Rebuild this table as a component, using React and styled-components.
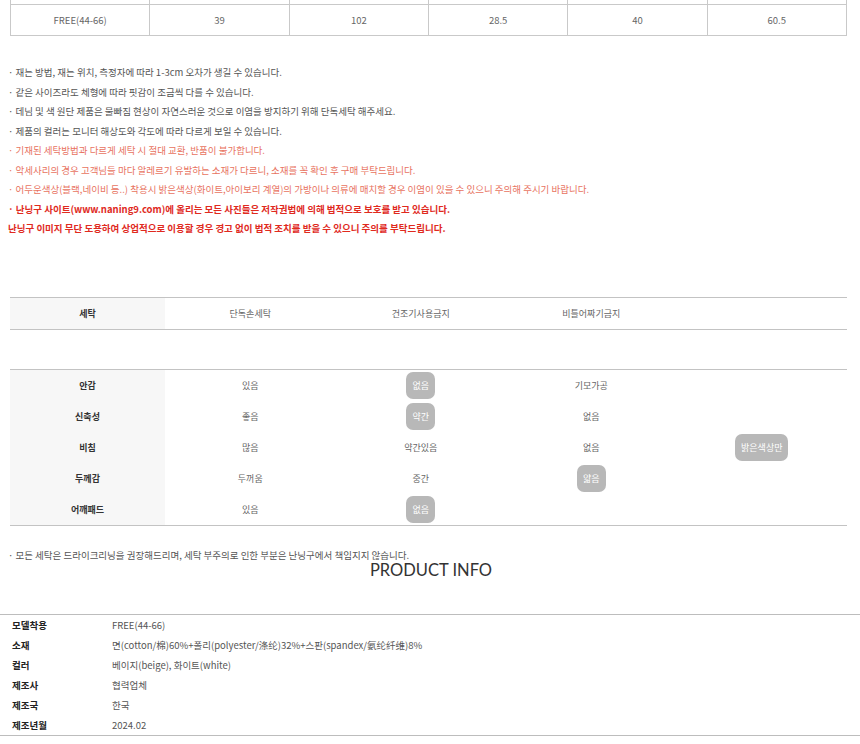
import React from "react";
import styled, { createGlobalStyle } from "styled-components";

const GlobalStyle = createGlobalStyle`
  body {
    margin: 0;
    background: #fff;
    font-family: "Noto Sans CJK KR", "Noto Sans", sans-serif;
    color: #555;
  }
`;

const Page = styled.div`
  width: 860px;
  overflow: hidden;
  padding-bottom: 20px;
`;

const Boxed = styled.div`
  margin: ${(p) => p.$mt || 0}px 13px 0 10px;
`;

const SizeTable = styled.div`
  display: grid;
  grid-template-columns: repeat(6, 1fr);
  border-left: 1px solid #c9c9c9;
`;

const SizeCell = styled.div`
  height: ${(p) => (p.$stub ? 4 : 30)}px;
  display: flex;
  align-items: center;
  justify-content: center;
  border-right: 1px solid #c9c9c9;
  border-bottom: 1px solid #c9c9c9;
  font-size: 9.5px;
  color: #666;
`;

const Notes = styled.ul`
  list-style: none;
  margin: ${(p) => p.$mt || 0}px 0 0 8px;
  padding: 0;
`;

const Note = styled.li`
  font-size: 9.5px;
  line-height: 19.5px;
  white-space: nowrap;
  color: ${(p) =>
    p.$tone === "warn" ? "#e8735f" : p.$tone === "alert" ? "#e02a1e" : "#555"};
  font-weight: ${(p) => (p.$tone === "alert" ? 700 : 400)};
`;

const Grid = styled.div`
  display: grid;
  grid-template-columns: 155px repeat(4, 1fr);
  border-top: 1px solid #c3c3c3;
  border-bottom: 1px solid #c3c3c3;
`;

const Label = styled.div`
  background: #f7f7f7;
  height: ${(p) => p.$h}px;
  display: flex;
  align-items: center;
  justify-content: center;
  font-size: 9px;
  font-weight: 700;
  color: #333;
`;

const Value = styled.div`
  height: ${(p) => p.$h}px;
  display: flex;
  align-items: center;
  justify-content: center;
  font-size: 9px;
  color: #666;
`;

const Pill = styled.span`
  display: inline-flex;
  align-items: center;
  justify-content: center;
  height: 27px;
  padding: 0 6px;
  border-radius: 7px;
  background: #b8b8b8;
  color: #fff;
  font-size: 9px;
`;

const Title = styled.h3`
  margin: -6px 0 0;
  text-align: center;
  font-family: Lato, "Noto Sans", sans-serif;
  font-weight: 400;
  font-size: 16.5px;
  line-height: 22px;
  color: #333;
  padding-left: 2px;
`;

const InfoTable = styled.div`
  margin-top: 33px;
  border-top: 1px solid #bdbdbd;
  border-bottom: 1px solid #bdbdbd;
`;

const InfoRow = styled.div`
  display: grid;
  grid-template-columns: 100px 1fr;
  height: 20px;
  align-items: center;
  padding-left: 12px;
  font-size: 9.5px;
`;

const InfoKey = styled.span`
  font-weight: 700;
  color: #222;
`;

const InfoVal = styled.span`
  color: #555;
`;

const sizeRow = ["FREE(44-66)", "39", "102", "28.5", "40", "60.5"];

const notes = [
  { t: "· 재는 방법, 재는 위치, 측정자에 따라 1-3cm 오차가 생길 수 있습니다." },
  { t: "· 같은 사이즈라도 체형에 따라 핏감이 조금씩 다를 수 있습니다." },
  { t: "· 데님 및 색 원단 제품은 물빠짐 현상이 자연스러운 것으로 이염을 방지하기 위해 단독세탁 해주세요." },
  { t: "· 제품의 컬러는 모니터 해상도와 각도에 따라 다르게 보일 수 있습니다." },
  { t: "· 기재된 세탁방법과 다르게 세탁 시 절대 교환, 반품이 불가합니다.", tone: "warn" },
  { t: "· 악세사리의 경우 고객님들 마다 알레르기 유발하는 소재가 다르니, 소재를 꼭 확인 후 구매 부탁드립니다.", tone: "warn" },
  { t: "· 어두운색상(블랙,네이비 등..) 착용시 밝은색상(화이트,아이보리 계열)의 가방이나 의류에 매치할 경우 이염이 있을 수 있으니 주의해 주시기 바랍니다.", tone: "warn" },
  { t: "· 난닝구 사이트(www.naning9.com)에 올리는 모든 사진들은 저작권법에 의해 법적으로 보호를 받고 있습니다.", tone: "alert" },
  { t: "난닝구 이미지 무단 도용하여 상업적으로 이용할 경우 경고 없이 법적 조치를 받을 수 있으니 주의를 부탁드립니다.", tone: "alert" },
];

const wash = ["단독손세탁", "건조기사용금지", "비틀어짜기금지", ""];

// each row: label + 4 options, picked = index of highlighted option
const fabric = [
  { label: "안감", opts: ["있음", "없음", "기모가공", ""], picked: 1 },
  { label: "신축성", opts: ["좋음", "약간", "없음", ""], picked: 1 },
  { label: "비침", opts: ["많음", "약간있음", "없음", "밝은색상만"], picked: 3 },
  { label: "두께감", opts: ["두꺼움", "중간", "얇음", ""], picked: 2 },
  { label: "어깨패드", opts: ["있음", "없음", "", ""], picked: 1 },
];

const info = [
  ["모델착용", "FREE(44-66)"],
  ["소재", "면(cotton/棉)60%+폴리(polyester/涤纶)32%+스판(spandex/氨纶纤维)8%"],
  ["컬러", "베이지(beige), 화이트(white)"],
  ["제조사", "협력업체"],
  ["제조국", "한국"],
  ["제조년월", "2024.02"],
];

const App = () => {
  return (
    <Page>
      <GlobalStyle />
      <Boxed>
        <SizeTable>
          {sizeRow.map((_, i) => (
            <SizeCell key={"h" + i} $stub />
          ))}
          {sizeRow.map((v, i) => (
            <SizeCell key={i}>{v}</SizeCell>
          ))}
        </SizeTable>
      </Boxed>

      <Notes $mt={27}>
        {notes.map((n, i) => (
          <Note key={i} $tone={n.tone}>{n.t}</Note>
        ))}
      </Notes>

      <Boxed $mt={58}>
        <Grid>
          <Label $h={31}>세탁</Label>
          {wash.map((w, i) => (
            <Value key={i} $h={31}>{w}</Value>
          ))}
        </Grid>
      </Boxed>

      <Boxed $mt={39}>
        <Grid>
          {fabric.map((row) => (
            <React.Fragment key={row.label}>
              <Label $h={31}>{row.label}</Label>
              {row.opts.map((o, i) => (
                <Value key={i} $h={31}>
                  {o && i === row.picked ? <Pill>{o}</Pill> : o}
                </Value>
              ))}
            </React.Fragment>
          ))}
        </Grid>
      </Boxed>

      <Notes $mt={20}>
        <Note>· 모든 세탁은 드라이크리닝을 권장해드리며, 세탁 부주의로 인한 부분은 난닝구에서 책임지지 않습니다.</Note>
      </Notes>
      <Title>PRODUCT INFO</Title>

      <InfoTable>
        {info.map(([k, v]) => (
          <InfoRow key={k}>
            <InfoKey>{k}</InfoKey>
            <InfoVal>{v}</InfoVal>
          </InfoRow>
        ))}
      </InfoTable>
    </Page>
  );
};

export default App;
